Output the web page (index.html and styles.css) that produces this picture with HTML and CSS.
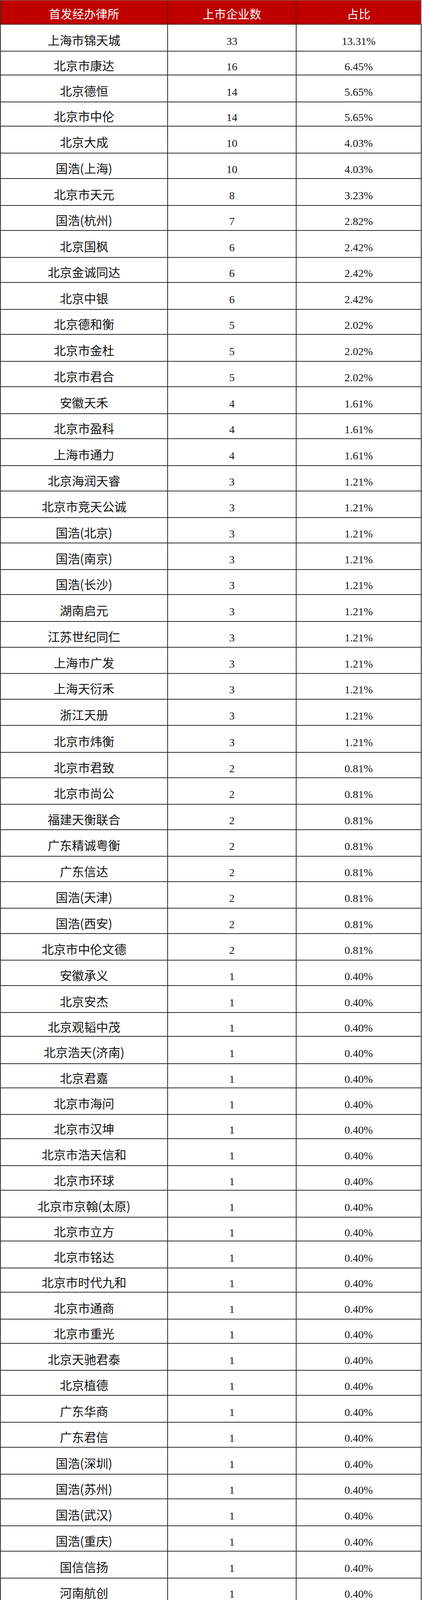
FILE: index.html
```html
<!DOCTYPE html>
<html lang="zh-CN">
<head>
<meta charset="utf-8">
<title>首发经办律所</title>
<link rel="stylesheet" href="styles.css">
</head>
<body>
<div class="rank" role="table">
<div class="row head h62" role="row"><div class="cell th" role="columnheader">首发经办律所</div><div class="cell th" role="columnheader">上市企业数</div><div class="cell th last" role="columnheader">占比</div></div>
<div class="row h69" role="row"><div class="cell name">上海市锦天城</div><div class="cell num">33</div><div class="cell num">13.31%</div></div>
<div class="row h61" role="row"><div class="cell name">北京市康达</div><div class="cell num">16</div><div class="cell num">6.45%</div></div>
<div class="row h69" role="row"><div class="cell name">北京德恒</div><div class="cell num">14</div><div class="cell num">5.65%</div></div>
<div class="row h62" role="row"><div class="cell name">北京市中伦</div><div class="cell num">14</div><div class="cell num">5.65%</div></div>
<div class="row h69" role="row"><div class="cell name">北京大成</div><div class="cell num">10</div><div class="cell num">4.03%</div></div>
<div class="row h65" role="row"><div class="cell name">国浩(上海)</div><div class="cell num">10</div><div class="cell num">4.03%</div></div>
<div class="row h69" role="row"><div class="cell name">北京市天元</div><div class="cell num">8</div><div class="cell num">3.23%</div></div>
<div class="row h64" role="row"><div class="cell name">国浩(杭州)</div><div class="cell num">7</div><div class="cell num">2.82%</div></div>
<div class="row h69" role="row"><div class="cell name">北京国枫</div><div class="cell num">6</div><div class="cell num">2.42%</div></div>
<div class="row h64" role="row"><div class="cell name">北京金诚同达</div><div class="cell num">6</div><div class="cell num">2.42%</div></div>
<div class="row h69" role="row"><div class="cell name">北京中银</div><div class="cell num">6</div><div class="cell num">2.42%</div></div>
<div class="row h64" role="row"><div class="cell name">北京德和衡</div><div class="cell num">5</div><div class="cell num">2.02%</div></div>
<div class="row h69" role="row"><div class="cell name">北京市金杜</div><div class="cell num">5</div><div class="cell num">2.02%</div></div>
<div class="row h65" role="row"><div class="cell name">北京市君合</div><div class="cell num">5</div><div class="cell num">2.02%</div></div>
<div class="row h69" role="row"><div class="cell name">安徽天禾</div><div class="cell num">4</div><div class="cell num">1.61%</div></div>
<div class="row h64" role="row"><div class="cell name">北京市盈科</div><div class="cell num">4</div><div class="cell num">1.61%</div></div>
<div class="row h69" role="row"><div class="cell name">上海市通力</div><div class="cell num">4</div><div class="cell num">1.61%</div></div>
<div class="row h65" role="row"><div class="cell name">北京海润天睿</div><div class="cell num">3</div><div class="cell num">1.21%</div></div>
<div class="row h68" role="row"><div class="cell name">北京市竞天公诚</div><div class="cell num">3</div><div class="cell num">1.21%</div></div>
<div class="row h65" role="row"><div class="cell name">国浩(北京)</div><div class="cell num">3</div><div class="cell num">1.21%</div></div>
<div class="row h68" role="row"><div class="cell name">国浩(南京)</div><div class="cell num">3</div><div class="cell num">1.21%</div></div>
<div class="row h64" role="row"><div class="cell name">国浩(长沙)</div><div class="cell num">3</div><div class="cell num">1.21%</div></div>
<div class="row h69" role="row"><div class="cell name">湖南启元</div><div class="cell num">3</div><div class="cell num">1.21%</div></div>
<div class="row h66" role="row"><div class="cell name">江苏世纪同仁</div><div class="cell num">3</div><div class="cell num">1.21%</div></div>
<div class="row h67" role="row"><div class="cell name">上海市广发</div><div class="cell num">3</div><div class="cell num">1.21%</div></div>
<div class="row h66" role="row"><div class="cell name">上海天衍禾</div><div class="cell num">3</div><div class="cell num">1.21%</div></div>
<div class="row h67" role="row"><div class="cell name">浙江天册</div><div class="cell num">3</div><div class="cell num">1.21%</div></div>
<div class="row h69" role="row"><div class="cell name">北京市炜衡</div><div class="cell num">3</div><div class="cell num">1.21%</div></div>
<div class="row h65" role="row"><div class="cell name">北京市君致</div><div class="cell num">2</div><div class="cell num">0.81%</div></div>
<div class="row h68" role="row"><div class="cell name">北京市尚公</div><div class="cell num">2</div><div class="cell num">0.81%</div></div>
<div class="row h65" role="row"><div class="cell name">福建天衡联合</div><div class="cell num">2</div><div class="cell num">0.81%</div></div>
<div class="row h68" role="row"><div class="cell name">广东精诚粤衡</div><div class="cell num">2</div><div class="cell num">0.81%</div></div>
<div class="row h65" role="row"><div class="cell name">广东信达</div><div class="cell num">2</div><div class="cell num">0.81%</div></div>
<div class="row h68" role="row"><div class="cell name">国浩(天津)</div><div class="cell num">2</div><div class="cell num">0.81%</div></div>
<div class="row h65" role="row"><div class="cell name">国浩(西安)</div><div class="cell num">2</div><div class="cell num">0.81%</div></div>
<div class="row h68" role="row"><div class="cell name">北京市中伦文德</div><div class="cell num">2</div><div class="cell num">0.81%</div></div>
<div class="row h65" role="row"><div class="cell name">安徽承义</div><div class="cell num">1</div><div class="cell num">0.40%</div></div>
<div class="row h69" role="row"><div class="cell name">北京安杰</div><div class="cell num">1</div><div class="cell num">0.40%</div></div>
<div class="row h61" role="row"><div class="cell name">北京观韬中茂</div><div class="cell num">1</div><div class="cell num">0.40%</div></div>
<div class="row h70" role="row"><div class="cell name">北京浩天(济南)</div><div class="cell num">1</div><div class="cell num">0.40%</div></div>
<div class="row h62" role="row"><div class="cell name">北京君嘉</div><div class="cell num">1</div><div class="cell num">0.40%</div></div>
<div class="row h68" role="row"><div class="cell name">北京市海问</div><div class="cell num">1</div><div class="cell num">0.40%</div></div>
<div class="row h62" role="row"><div class="cell name">北京市汉坤</div><div class="cell num">1</div><div class="cell num">0.40%</div></div>
<div class="row h69" role="row"><div class="cell name">北京市浩天信和</div><div class="cell num">1</div><div class="cell num">0.40%</div></div>
<div class="row h63" role="row"><div class="cell name">北京市环球</div><div class="cell num">1</div><div class="cell num">0.40%</div></div>
<div class="row h69" role="row"><div class="cell name">北京市京翰(太原)</div><div class="cell num">1</div><div class="cell num">0.40%</div></div>
<div class="row h61" role="row"><div class="cell name">北京市立方</div><div class="cell num">1</div><div class="cell num">0.40%</div></div>
<div class="row h69" role="row"><div class="cell name">北京市铭达</div><div class="cell num">1</div><div class="cell num">0.40%</div></div>
<div class="row h62" role="row"><div class="cell name">北京市时代九和</div><div class="cell num">1</div><div class="cell num">0.40%</div></div>
<div class="row h69" role="row"><div class="cell name">北京市通商</div><div class="cell num">1</div><div class="cell num">0.40%</div></div>
<div class="row h62" role="row"><div class="cell name">北京市重光</div><div class="cell num">1</div><div class="cell num">0.40%</div></div>
<div class="row h69" role="row"><div class="cell name">北京天驰君泰</div><div class="cell num">1</div><div class="cell num">0.40%</div></div>
<div class="row h64" role="row"><div class="cell name">北京植德</div><div class="cell num">1</div><div class="cell num">0.40%</div></div>
<div class="row h69" role="row"><div class="cell name">广东华商</div><div class="cell num">1</div><div class="cell num">0.40%</div></div>
<div class="row h64" role="row"><div class="cell name">广东君信</div><div class="cell num">1</div><div class="cell num">0.40%</div></div>
<div class="row h69" role="row"><div class="cell name">国浩(深圳)</div><div class="cell num">1</div><div class="cell num">0.40%</div></div>
<div class="row h63" role="row"><div class="cell name">国浩(苏州)</div><div class="cell num">1</div><div class="cell num">0.40%</div></div>
<div class="row h69" role="row"><div class="cell name">国浩(武汉)</div><div class="cell num">1</div><div class="cell num">0.40%</div></div>
<div class="row h65" role="row"><div class="cell name">国浩(重庆)</div><div class="cell num">1</div><div class="cell num">0.40%</div></div>
<div class="row h69" role="row"><div class="cell name">国信信扬</div><div class="cell num">1</div><div class="cell num">0.40%</div></div>
<div class="row h64" role="row"><div class="cell name">河南航创</div><div class="cell num">1</div><div class="cell num">0.40%</div></div>
<div class="row h69" role="row"><div class="cell name">河南明商</div><div class="cell num">1</div><div class="cell num">0.40%</div></div>
<div class="row h64" role="row"><div class="cell name">湖北瑞通天元</div><div class="cell num">1</div><div class="cell num">0.40%</div></div>
<div class="row h69" role="row"><div class="cell name">湖北郧阳</div><div class="cell num">1</div><div class="cell num">0.40%</div></div>
<div class="row h65" role="row"><div class="cell name">湖北众勤</div><div class="cell num">1</div><div class="cell num">0.40%</div></div>
<div class="row h70" role="row"><div class="cell name">江苏汇典</div><div class="cell num">1</div><div class="cell num">0.40%</div></div>
<div class="row h63" role="row"><div class="cell name">江苏新苏</div><div class="cell num">1</div><div class="cell num">0.40%</div></div>
<div class="row h69" role="row"><div class="cell name">辽宁恒信</div><div class="cell num">1</div><div class="cell num">0.40%</div></div>
<div class="row h64" role="row"><div class="cell name">山西华炬</div><div class="cell num">1</div><div class="cell num">0.40%</div></div>
<div class="row h69" role="row"><div class="cell name">上海东方华银</div><div class="cell num">1</div><div class="cell num">0.40%</div></div>
<div class="row h64" role="row"><div class="cell name">上海市方达</div><div class="cell num">1</div><div class="cell num">0.40%</div></div>
<div class="row h69" role="row"><div class="cell name">上海市汇业</div><div class="cell num">1</div><div class="cell num">0.40%</div></div>
<div class="row h65" role="row"><div class="cell name">上海市君悦</div><div class="cell num">1</div><div class="cell num">0.40%</div></div>
<div class="row h68" role="row"><div class="cell name">上海天璇</div><div class="cell num">1</div><div class="cell num">0.40%</div></div>
<div class="row h64" role="row"><div class="cell name">天津金诺</div><div class="cell num">1</div><div class="cell num">0.40%</div></div>
<div class="row h68" role="row"><div class="cell name">万商天勤(上海)</div><div class="cell num">1</div><div class="cell num">0.40%</div></div>
<div class="row h63" role="row"><div class="cell name">浙江六和</div><div class="cell num">1</div><div class="cell num">0.40%</div></div>
<div class="row h66" role="row"><div class="cell name">重庆源伟</div><div class="cell num">1</div><div class="cell num">0.40%</div></div>
</div>
</body>
</html>
```

FILE: styles.css
```css
html, body {
  margin: 0;
  padding: 0;
  background: #ffffff;
}

.rank {
  box-sizing: border-box;
  width: 1079px;
  border-left: 2px solid #2e2e2e;
  border-top: 1px solid #8c8c8c;
}

.row {
  display: grid;
  grid-template-columns: 428px 329px 320px;
  box-sizing: border-box;
}

.cell {
  box-sizing: border-box;
  display: flex;
  align-items: center;
  justify-content: center;
  white-space: nowrap;
  overflow: hidden;
  border-right: 2px solid #2b2b2b;
  border-bottom: 2px solid #2b2b2b;
  color: #141414;
}

.th {
  background: #c00000;
  color: #ffffff;
  font-family: "Noto Sans CJK SC", "Noto Sans", sans-serif;
  font-size: 30px;
  line-height: 36px;
  padding-top: 6px;
  border-bottom-color: #4a0606;
  border-right-color: #5a1010;
}

.th.last { border-right-color: #8a8a8a; }

.name {
  font-family: "Noto Sans CJK SC", "Noto Sans", sans-serif;
  font-size: 31px;
  line-height: 36px;
  padding-top: 10px;
}

.num {
  font-family: "Liberation Serif", "Times New Roman", serif;
  font-size: 28px;
  line-height: 32px;
  padding-top: 18px;
}

.h61 { height: 61px; }
.h62 { height: 62px; }
.h63 { height: 63px; }
.h64 { height: 64px; }
.h65 { height: 65px; }
.h66 { height: 66px; }
.h67 { height: 67px; }
.h68 { height: 68px; }
.h69 { height: 69px; }
.h70 { height: 70px; }
```
